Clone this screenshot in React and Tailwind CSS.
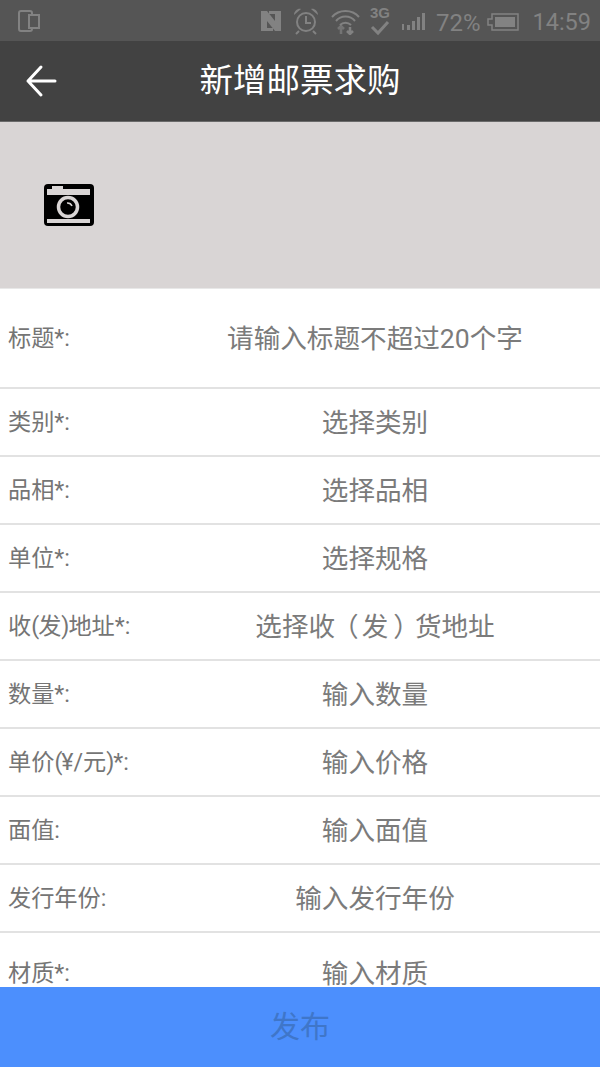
const Paren = ({ children }) => <span className="tracking-[-1px]">{children}</span>

const rows = [
  { id: "kind", label: "类别*:", hint: "选择类别" },
  { id: "grade", label: "品相*:", hint: "选择品相" },
  { id: "unit", label: "单位*:", hint: "选择规格" },
  {
    id: "address",
    label: <>收<Paren>(</Paren>发<Paren>)</Paren>地址*:</>,
    hint: (
      <>
        选择收
        <span className="ml-[-3px] mr-[3px]">（</span>
        发
        <span className="ml-[5px] mr-[-5px]">）</span>
        货地址
      </>
    ),
  },
  { id: "count", label: "数量*:", hint: "输入数量" },
  { id: "price", label: <>单价<Paren>(</Paren>¥/元<Paren>)</Paren>*:</>, hint: "输入价格" },
  { id: "face", label: "面值:", hint: "输入面值" },
  { id: "year", label: "发行年份:", hint: "输入发行年份" },
]

function Row({ label, hint, className }) {
  return (
    <div className={`flex items-center border-b-2 border-[#e2e2e2] ${className}`}>
      <div className="w-[150px] pl-[8px] pt-[1px] text-[23.200px] text-[#757575]">{label}</div>
      <div className="w-[450px] pt-[2px] text-center text-[26.6px] text-[#7b7b7b]">{hint}</div>
    </div>
  )
}

function StatusBar() {
  return (
    <div className="flex h-[41px] items-center justify-between bg-[#555555] pl-[18px] pr-[9px] text-[#828282]">
      <svg width="22" height="24" viewBox="0 0 22 24" fill="none" stroke="currentColor" strokeWidth="2">
        <rect x="1" y="2" width="13" height="20" rx="2" />
        <rect x="11" y="6" width="10" height="13" fill="#555555" />
      </svg>
      <div className="flex items-center">
        <svg width="22" height="22" viewBox="0 0 22 22" className="mr-[10px] mt-[1px]">
          <path d="M1 1h6l8 10V4H9V1h12v20h-6L7 11v7h6v3H1z" fill="currentColor" />
        </svg>
        <svg width="28" height="28" viewBox="0 0 28 28" fill="none" stroke="currentColor" strokeWidth="2" className="mr-[11px] mt-[1px]">
          <circle cx="14" cy="15" r="9" />
          <path d="M14 9v7h5M7 24l-3 3M21 24l3 3" />
          <path d="M2 8c0-4 4-7 7-6zM26 8c0-4-4-7-7-6z" fill="currentColor" stroke="none" />
        </svg>
        <svg width="29" height="28" viewBox="0 0 29 28" fill="none" stroke="currentColor" strokeWidth="2" className="mr-[10px] mt-[1px]">
          <path d="M1 10c7-8 20-8 27 0M5 14c5-6 14-6 19 0M9 18c3-3 8-3 11 0" />
          <path d="M10 27v-6M7 22l3-3 3 3" opacity="0.7" strokeWidth="2.500" />
          <path d="M19 20v6M16 24l3 3 3-3" strokeWidth="2.500" />
        </svg>
        <div className="mr-[12px] flex w-[20px] flex-col items-center">
          <span className="font-['Liberation_Sans',sans-serif] text-[15px] font-bold leading-[15px]">3G</span>
          <svg width="20" height="16" viewBox="0 0 20 16" fill="none" stroke="currentColor" strokeWidth="3">
            <path d="M2 7l6 6L18 2" />
          </svg>
        </div>
        <svg width="25" height="18" viewBox="0 0 25 18" fill="currentColor" className="mr-[9px] mt-[2px]">
          <rect x="0" y="11" width="2" height="6" />
          <rect x="5" y="12" width="3" height="5" />
          <rect x="10" y="8" width="3" height="9" />
          <rect x="15" y="4" width="3" height="13" />
          <rect x="20" y="0" width="3" height="17" />
        </svg>
        <span className="mr-[7px] mt-[4px] font-['Roboto',sans-serif] text-[24px] leading-none">72%</span>
        <svg width="32" height="18" viewBox="0 0 32 18" className="mr-[13px] mt-[2px]">
          <path d="M5 1h26v16H5v-5H1V6h4z" fill="none" stroke="currentColor" strokeWidth="1.500" />
          <rect x="8" y="4" width="20" height="10" fill="currentColor" />
        </svg>
        <span className="mt-[4px] font-['Roboto',sans-serif] text-[23.500px] leading-none">14:59</span>
      </div>
    </div>
  )
}

export default function App() {
  return (
    <div className="flex h-[1067px] w-[600px] flex-col overflow-hidden bg-white font-['Roboto','Noto_Sans_CJK_SC',sans-serif]">
      <StatusBar />

      <div className="relative flex h-[81px] items-center justify-center border-b border-[#6a6a6a] bg-[#424242]">
        <svg width="34" height="34" viewBox="0 0 34 34" fill="none" stroke="white" strokeWidth="3" strokeLinecap="round" strokeLinejoin="round" className="absolute left-[24px] top-[23px]">
          <path d="M4 17h27M17 3L4 17l13 14" />
        </svg>
        <span className="pb-[1px] text-[33.500px] leading-none text-white">新增邮票求购</span>
      </div>

      <div className="flex h-[167px] items-center border-b border-[#e8e8e8] bg-[#d9d5d5] pl-[44px]">
        <svg width="50" height="44" viewBox="0 0 50 44">
          <rect x="0" y="1" width="50" height="42" rx="4" fill="black" />
          <rect x="3" y="6" width="43" height="6" fill="#d9d5d5" />
          <rect x="8" y="3" width="11" height="4" fill="#d9d5d5" />
          <rect x="3" y="36" width="43" height="4" fill="#d9d5d5" />
          <circle cx="24" cy="24" r="9.500" fill="none" stroke="#d9d5d5" strokeWidth="3.500" />
          <path d="M23 20a5 5 0 0 1 5 3" fill="none" stroke="#d9d5d5" strokeWidth="1.500" />
        </svg>
      </div>

      <div className="min-h-0 flex-1 overflow-hidden">
        <Row label="标题*:" hint="请输入标题不超过20个字" className="h-[100px]" />
        {rows.map((row) => (
          <Row key={row.id} label={row.label} hint={row.hint} className="h-[68px]" />
        ))}
        <Row label="材质*:" hint="输入材质" className="h-[82px]" />
      </div>

      <button type="button" className="h-[80px] shrink-0 bg-[#4c8ffd] pb-[2px] text-[30px] text-[#3f76c9]">
        发布
      </button>
    </div>
  )
}
